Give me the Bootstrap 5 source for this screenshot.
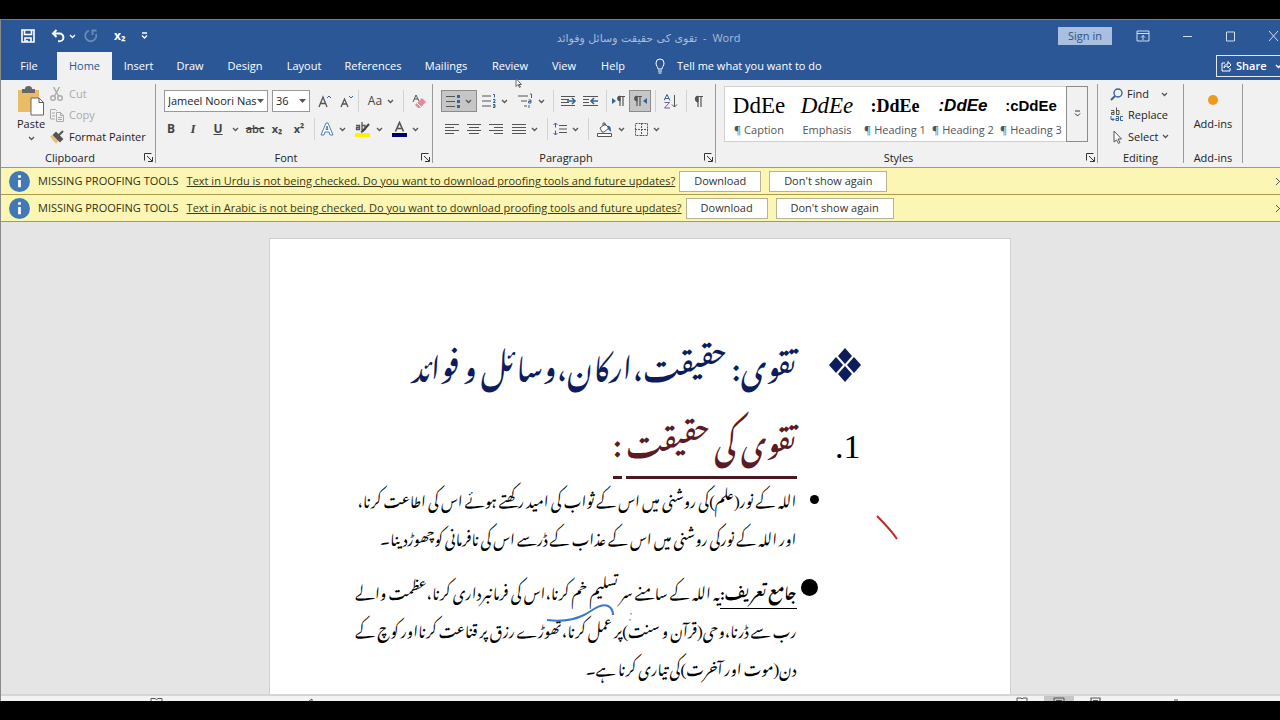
<!DOCTYPE html>
<html lang="en">
<head>
<meta charset="utf-8">
<meta name="viewport" content="width=device-width, initial-scale=1">
<title>Word</title>
<link href="https://cdn.jsdelivr.net/npm/bootstrap@5.3.0/dist/css/bootstrap.min.css" rel="stylesheet">
<script src="https://cdn.jsdelivr.net/npm/bootstrap@5.3.0/dist/js/bootstrap.bundle.min.js" defer></script>
<style>
:root{--blue:#2b5797}
body{background:#000;font:11px/16px "Open Sans","Noto Sans",sans-serif;color:#222;min-height:100vh;padding:19px 0;overflow:hidden}
button,select,input{font:inherit;color:inherit}
svg{display:block;fill:none;stroke:#555;flex:none}
.app-window{background:#e5e5e5;border-left:1px solid #8a8a8a;border-top:1px solid #6c7f9c}
.plain{background:none;border:0;padding:0;white-space:nowrap}
.plain:hover{background:#d5d5d5}
/* blue title area */
.titlebar{height:32px;background:var(--blue);color:#fff}
.titlebar svg,.tabs svg{stroke:#fff}
.quick{padding-left:20px}
.doc-name{color:#a9bcd8}
.doc-name bdi{font-family:"DejaVu Sans",sans-serif}
.sub-btn{font-size:12px;font-weight:700}
.signin{background:#a9bfdf;color:#31527f;width:54px;height:18px}
.win-controls{margin-right:-2px}
.win-controls svg{stroke:#d3deee}
.tabs{height:28px;background:var(--blue)}
.tabs .tab-link{color:#fff;text-decoration:none;height:28px;line-height:28px;text-align:center}
.tabs .active{background:#f1f1f1;color:#2b5797}
.share{border:1px solid #dfe8f5;color:#fff;height:22px;width:70px;margin-right:-6px}
/* ribbon */
.ribbon{background:#f1f1f1;height:88px;border-bottom:1px solid #a49c62}
.group{border-right:1px solid #9a9a9a;margin:4px 0;position:relative}
.group-label{height:16px;text-align:center}
.launch{position:absolute;right:2px;bottom:1px}
.group-body{height:66px}
.tool-row{height:30px}
.ib{width:22px;height:22px;display:flex;align-items:center;justify-content:center;color:#444}
.ib.split{width:36px;gap:5px}
.ib.on{background:#c6c6c6;border:1px solid #8c8c8c}
.vline{width:1px;height:22px;background:#d2d2d2}
.combo{border:1px solid #999;background:#fff;height:22px;padding:0 3px;white-space:nowrap}
.combo select{appearance:none;border:0;background:none;padding:0;width:100%;min-width:0;outline:0}
.gallery-wrap{padding-top:2px}
.gallery{background:#fff;border:1px solid #d0d0d0;height:56px}
.gallery .more{width:22px;border:1px solid #8c8c8c;background:#f1f1f1;height:56px;margin-top:-1px;margin-right:-1px}
.style-item{width:68px;text-align:center;color:#555}
.style-item .sample{display:block;height:32px;line-height:32px;color:#000;font-family:"Liberation Serif",serif;font-size:23px}
.style-item .sample.hd{font-size:18px;font-weight:700}
.style-item .sample.sans{font-family:"Liberation Sans",sans-serif}
.off{color:#aaa}
/* notices */
.notice{background:#fcf6b4;height:27px;border-bottom:1px solid #a89c4a;padding-left:8px;color:#332f10}
.notice a{color:#3c3810}
.notice .act{background:#fff;border:1px solid #b5b394;height:21px;color:#333}
.wide-82{width:82px}.wide-118{width:118px}
.notice .x{margin-right:-4px}
/* document */
.canvas-area{flex:1 1 0;min-height:0;overflow:hidden;padding:16px 2px 0 0;border-bottom:2px solid #d5d5d5}
.sheet{background:#fff;border:1px solid #cfcfcf;max-width:742px;width:100%;min-height:800px;padding:88px 149px 0 88px;font-family:"Noto Nastaliq Urdu",serif;color:#000;position:relative}
.sheet h1,.sheet h2{font-family:inherit;font-size:30px;font-weight:500;margin:0;height:76px;line-height:72px}
.sheet h1{color:#0c1c5c}
.sheet h2{color:#5b1a24}
.sheet h2 span{border-bottom:3px solid #4a1820;display:inline-block;height:76px}
.marker{width:64px;flex:none}
.num{font:34px/88px "Liberation Serif",serif;height:76px}
.sheet p{font-size:15px;line-height:38px;margin:0}
.sheet .full{display:block;text-align:justify;text-align-last:justify;white-space:nowrap}
.term{font-weight:700;border-bottom:1px solid #000;display:inline-block;height:38px}
.ink{position:absolute;overflow:visible}
.statusbar{height:5px;background:#f3f3f3;overflow:hidden}
.statusbar svg{height:5px}
.pointer{position:absolute;left:515px;top:78px;z-index:3}
</style>
</head>
<body class="d-flex flex-column">
<svg width="0" height="0" class="position-absolute" aria-hidden="true"><defs>
<symbol id="cv" viewBox="0 0 7 5"><path d="M1 1l2.500 2.500L6 1" stroke-width="1.300"/></symbol>
<symbol id="tri" viewBox="0 0 7 4"><path d="M0 0h7L3.500 4z" fill="#555" stroke="none"/></symbol>
<symbol id="launch" viewBox="0 0 9 9"><path d="M.5 7.500V.5h7M3 3l5 5M8.500 4v4.500H4" stroke="#333"/></symbol>
<symbol id="info" viewBox="0 0 20 20"><circle cx="10" cy="10" r="10" fill="#4279b5" stroke="none"/><path d="M10 4v2.500M10 8.500v7" stroke="#fff" stroke-width="2.600"/></symbol>
<symbol id="close" viewBox="0 0 9 9"><path d="M1 1l7 7M8 1L1 8"/></symbol>
</defs></svg>

<main class="app-window d-flex flex-column flex-grow-1 overflow-hidden">
<header>
<div class="titlebar d-flex align-items-center position-relative">
 <div class="quick d-flex align-items-center">
  <button class="plain" aria-label="Save"><svg width="14" height="14"><path d="M1 1h12v12H1zM3.500 1v4.500h7V1M4 13V9h6v4M6 11v2" stroke-width="1.600"/></svg></button>
  <button class="plain d-flex align-items-center gap-1 ms-3" aria-label="Undo"><svg width="14" height="14"><path d="M5.500 1L2 4.500 5.500 8M2 4.500h6.500a3.800 3.800 0 010 7.800H7" stroke-width="2"/></svg><svg width="7" height="5"><use href="#cv"/></svg></button>
  <button class="plain ms-2" aria-label="Repeat"><svg width="14" height="14" opacity=".3"><path d="M5 1.500a5.500 5.500 0 107 3.500M12.500 1.500H8.500V6" stroke-width="1.800"/></svg></button>
  <button class="plain text-white sub-btn ms-3" aria-label="Subscript">x₂</button>
  <button class="plain ms-3" aria-label="Customize"><svg width="7" height="8"><path d="M1 1h5M1 3.500L3.500 6 6 3.500" stroke-width="1.300"/></svg></button>
 </div>
 <div class="doc-name position-absolute start-50 translate-middle-x ps-3 pt-1"><bdi lang="ur">تقوی کی حقیقت وسائل وفوائد</bdi>&nbsp; - &nbsp;Word</div>
 <div class="win-controls d-flex align-items-center ms-auto">
  <button class="signin plain me-4">Sign in</button>
  <div class="d-flex align-items-center gap-4">
  <button class="plain" aria-label="Ribbon display options"><svg width="14" height="12"><path d="M1 1h12v10H1zM1 3.500h12M7 10V5.500M5 7.500l2-2 2 2"/></svg></button>
  <button class="plain ps-2" aria-label="Minimize"><svg width="11" height="11"><path d="M1 5.500h9"/></svg></button>
  <button class="plain ps-2" aria-label="Maximize"><svg width="11" height="11"><path d="M1.500 1h8v9h-8z"/></svg></button>
  <button class="plain ps-2" aria-label="Close"><svg width="14" height="12"><path d="M1 1l9 10M10 1L1 11"/></svg></button>
  </div>
 </div>
</div>
<nav class="tabs d-flex align-items-center">
 <a href="#" class="tab-link" style="width:56px">File</a>
 <a href="#" class="tab-link active" style="width:55px">Home</a>
 <a href="#" class="tab-link" style="width:53px">Insert</a>
 <a href="#" class="tab-link" style="width:50px">Draw</a>
 <a href="#" class="tab-link" style="width:60px">Design</a>
 <a href="#" class="tab-link" style="width:58px">Layout</a>
 <a href="#" class="tab-link" style="width:80px">References</a>
 <a href="#" class="tab-link" style="width:66px">Mailings</a>
 <a href="#" class="tab-link" style="width:62px">Review</a>
 <a href="#" class="tab-link" style="width:46px">View</a>
 <a href="#" class="tab-link" style="width:52px">Help</a>
 <button class="plain text-white d-flex align-items-center gap-2 ps-3"><svg width="14" height="16"><path d="M3 11c0-2-2-3-2-6a4 4 0 018 0c0 3-2 4-2 6zM3 13h4M3.500 15h3"/></svg>Tell me what you want to do</button>
 <button class="share plain ms-auto d-flex align-items-center gap-1 px-1 fw-semibold"><svg width="11" height="12"><path d="M4 3H1v8h8V8M3 8c0-3 2-4 4-4V1.500L10 5 7 8V6C5 6 4 6.500 3 8z"/></svg>Share<svg width="7" height="5" class="ms-1"><use href="#cv"/></svg></button>
</nav>
</header>

<section class="ribbon d-flex" aria-label="Home">
 <div class="group" style="width:155px">
  <div class="group-body d-flex">
   <button class="plain ps-3 d-flex flex-column align-items-center"><svg width="27" height="32"><path d="M0 6h21v22H0z" fill="#e9bd68" stroke="none"/><path d="M4 5h3a3.500 3 0 017 0h3v4H4z" fill="#666" stroke="none"/><path d="M13 14h8l4.500 4.500V31H13z" fill="#fff" stroke="#666"/><path d="M21 14v4.500h4.500"/></svg><span>Paste</span><svg width="7" height="5" class="mt-1"><use href="#cv"/></svg></button>
   <div class="d-flex flex-column ms-1">
    <button class="plain off d-flex align-items-center gap-1" style="height:20px"><svg width="16" height="14"><g stroke="#aaa" stroke-width="1.400"><path d="M4.500 0l5 9M10.500 0l-5 9"/><circle cx="4" cy="11" r="2.300"/><circle cx="11" cy="11" r="2.300"/></g></svg>Cut</button>
    <button class="plain off d-flex align-items-center gap-1" style="height:22px"><svg width="16" height="14"><g stroke="#aaa"><path d="M6 11H1.500V1.500h5L8 3M3 5h3M3 8h3M7.500 4.500h4l3 3v6h-7zM11.500 4.500v3h3M9 9.500h4M9 11.500h4"/></g></svg>Copy</button>
    <button class="plain d-flex align-items-center gap-1" style="height:21px"><svg width="16" height="14"><path d="M1 6l4-1 5 5-3 4c-1-2-3-3-6-8z" fill="#e9c07a" stroke="none"/><path d="M5 5l2-2 6 6-2 2zM9.500 5.500L14 1" fill="#555" stroke="#555" stroke-width="2"/></svg>Format Painter</button>
   </div>
  </div>
  <div class="group-label pe-3">Clipboard</div><button class="plain launch" aria-label="Clipboard settings"><svg width="9" height="9"><use href="#launch"/></svg></button>
 </div>

 <div class="group" style="width:277px">
  <div class="group-body">
   <div class="tool-row d-flex align-items-center pt-1 ps-1 ms-1">
    <div class="combo d-flex align-items-center" style="width:104px"><select aria-label="Font"><option>Jameel Noori Nas</option></select><svg width="7" height="4"><use href="#tri"/></svg></div>
    <div class="combo d-flex align-items-center ms-1" style="width:38px"><select aria-label="Font size"><option>36</option></select><svg width="7" height="4"><use href="#tri"/></svg></div>
    <button class="plain ib ms-1" aria-label="Grow font"><svg width="14" height="14"><path d="M1 13L5 3l4 10M2.500 9.500h5" stroke-width="1.300"/><path d="M9 4l2-2 2 2" stroke="#37639c"/></svg></button>
    <button class="plain ib" aria-label="Shrink font"><svg width="14" height="14"><path d="M1 13l3.500-8L8 13M2 10h5" stroke-width="1.300"/><path d="M9 2l2 2 2-2" stroke="#37639c"/></svg></button>
    <span class="vline"></span>
    <button class="plain ib split ms-1" aria-label="Change case"><span style="font-size:12px">Aa</span><svg width="7" height="5"><use href="#cv"/></svg></button>
    <span class="vline ms-1"></span>
    <button class="plain ib ms-1" aria-label="Clear formatting"><svg width="14" height="15"><path d="M1 8l3-7 3 6M2 5h4"/><path d="M4 10l6-6 4 4-6 6H6l-3-3z" fill="#e58a98" stroke="none"/><path d="M5 9l4 4" stroke="#fff"/></svg></button>
   </div>
   <div class="tool-row d-flex align-items-center ps-1">
    <button class="plain ib fw-bold" style="font-size:12px">B</button>
    <button class="plain ib fst-italic fw-bold" style="font-size:13px;font-family:'Liberation Serif',serif">I</button>
    <button class="plain ib split ms-1" aria-label="Underline"><span class="text-decoration-underline fw-bold" style="font-size:12px">U</span><svg width="7" height="5" class="ms-1"><use href="#cv"/></svg></button>
    <button class="plain ib text-decoration-line-through fw-semibold">abc</button>
    <button class="plain ib fw-bold" aria-label="Subscript">x₂</button>
    <button class="plain ib fw-bold" aria-label="Superscript">x²</button>
    <span class="vline ms-1"></span>
    <button class="plain ib split" aria-label="Text effects"><svg width="14" height="14"><path d="M1 13L6 1h2l5 12h-3l-1-3H5l-1 3zM6 7.500h2L7 4z" stroke="#4e7fb8" fill="#fff"/></svg><svg width="7" height="5"><use href="#cv"/></svg></button>
    <button class="plain ib split" aria-label="Highlight"><svg width="16" height="16"><path d="M0 12h15v4H0z" fill="#fff200" stroke="none"/><path d="M1 4.500h3.500v4h-3v-2h3M7 1v7.500h3v-4H7" stroke-width="1.300"/><path d="M14 3l-6 7-2 1" stroke="#444" stroke-width="2"/></svg><svg width="7" height="5"><use href="#cv"/></svg></button>
    <button class="plain ib split" aria-label="Font colour"><svg width="15" height="16"><path d="M0 12h15v4H0z" fill="#000060" stroke="none"/><path d="M3.500 10.500l4-9 4 9M5 7.500h5" stroke-width="1.600"/></svg><svg width="7" height="5"><use href="#cv"/></svg></button>
   </div>
  </div>
  <div class="group-label pe-3">Font</div><button class="plain launch" aria-label="Font settings"><svg width="9" height="9"><use href="#launch"/></svg></button>
 </div>

 <div class="group" style="width:283px">
  <div class="group-body">
   <div class="tool-row d-flex align-items-center pt-1 ps-1 ms-1">
    <button class="plain ib split on" aria-label="Bullets"><svg width="14" height="14"><path d="M0 2.500h9M0 7.500h9M0 12.500h9"/><path d="M11 2.500h3M11 7.500h3M11 12.500h3" stroke="#37639c" stroke-width="3"/></svg><svg width="7" height="5"><use href="#cv"/></svg></button>
    <button class="plain ib split" aria-label="Numbering"><svg width="14" height="16"><path d="M0 3h9M0 8h9M0 13h9"/><path d="M11 1.500h1.500v3M11 6.500h2v1.500l-2 1.500h2.500M11 11.500h2v3h-2M11 13h2" stroke="#37639c"/></svg><svg width="7" height="5"><use href="#cv"/></svg></button>
    <button class="plain ib split" aria-label="Multilevel list"><svg width="15" height="16"><path d="M0 3h10M3 8h6M6 13h3"/><path d="M12 1h1.500v4M10.500 7h2.500v3h-2.500V8.500H13M11 12v3" stroke="#37639c"/></svg><svg width="7" height="5"><use href="#cv"/></svg></button>
    <span class="vline ms-1"></span>
    <button class="plain ib ms-1" aria-label="Indent"><svg width="16" height="12"><path d="M0 1.500h14M0 4.500h8M0 7.500h8M0 10.500h14"/><path d="M6 6h8M11 3l3 3-3 3" stroke="#37639c" stroke-width="1.600"/></svg></button>
    <button class="plain ib" aria-label="Outdent"><svg width="16" height="12"><path d="M0 1.500h15M0 4.500h6M0 7.500h6M0 10.500h15"/><path d="M8 6h7M11 3L8 6l3 3" stroke="#37639c" stroke-width="1.600"/></svg></button>
    <span class="vline ms-1"></span>
    <button class="plain ib" aria-label="Left to right"><svg width="13" height="12"><path d="M0 3l4 3-4 3z" fill="#37639c" stroke="none"/><path d="M8 1v10M11 1v10M6 1.500h7" stroke-width="1.200"/><path d="M8 1a2.500 2.500 0 000 5z" fill="#555"/></svg></button>
    <button class="plain ib on" aria-label="Right to left"><svg width="13" height="12"><path d="M13 3L9 6l4 3z" fill="#37639c" stroke="none"/><path d="M3 1v10M6 1v10M2 1.500h6" stroke-width="1.200"/><path d="M3 1a2.500 2.500 0 000 5z" fill="#555"/></svg></button>
    <span class="vline ms-1"></span>
    <button class="plain ib ms-1" aria-label="Sort"><svg width="14" height="15"><path d="M0 6.500L3 .5l3 6M1 4.500h4" stroke="#37639c"/><path d="M.5 8.500h5l-5 5.500h5.500" stroke="#765a8c"/><path d="M10.500 1v12M8 10.500l2.500 2.500 2.500-2.500"/></svg></button>
    <span class="vline ms-1"></span>
    <button class="plain ib" aria-label="Show marks"><svg width="10" height="13"><path d="M5 1v11M8 1v11M4 1.500h6" stroke-width="1.200"/><path d="M5 1a2.500 2.800 0 000 6z" fill="#555"/></svg></button>
   </div>
   <div class="tool-row d-flex align-items-center ps-1 ms-1">
    <button class="plain ib" aria-label="Align left"><svg width="14" height="12"><path d="M0 1.500h14M0 4.500h9M0 7.500h14M0 10.500h9"/></svg></button>
    <button class="plain ib" aria-label="Center"><svg width="14" height="12"><path d="M0 1.500h14M2 4.500h10M0 7.500h14M2 10.500h10"/></svg></button>
    <button class="plain ib" aria-label="Align right"><svg width="14" height="12"><path d="M0 1.500h14M5 4.500h9M0 7.500h14M5 10.500h9"/></svg></button>
    <button class="plain ib split" aria-label="Justify"><svg width="14" height="12"><path d="M0 1.500h14M0 4.500h14M0 7.500h14M0 10.500h14"/></svg><svg width="7" height="5"><use href="#cv"/></svg></button>
    <span class="vline ms-1"></span>
    <button class="plain ib split" aria-label="Line spacing"><svg width="14" height="14"><path d="M6 3.500h8M6 7h8M6 10.500h8"/><path d="M2.500 1v4.500M.5 3l2-2 2 2M2.500 8.500V13M.5 11l2 2 2-2" stroke="#37639c"/></svg><svg width="7" height="5"><use href="#cv"/></svg></button>
    <span class="vline ms-1"></span>
    <button class="plain ib split ms-1" aria-label="Shading"><svg width="16" height="15"><path d="M.5 11.500h14v3H.5zM3 6l5-4 4 4-5 4H5zM6 4V1h2v3" fill="#fff"/><path d="M10 4c3-1 4 1 4 6l-3-3" fill="#37639c" stroke="none"/></svg><svg width="7" height="5"><use href="#cv"/></svg></button>
    <button class="plain ib split" aria-label="Borders"><svg width="13" height="13"><path d="M.5.5h12v12H.5zM6.500 0v13M0 6.500h13" stroke-dasharray="2 1"/></svg><svg width="7" height="5"><use href="#cv"/></svg></button>
   </div>
  </div>
  <div class="group-label pe-3">Paragraph</div><button class="plain launch" aria-label="Paragraph settings"><svg width="9" height="9"><use href="#launch"/></svg></button>
 </div>

 <div class="group px-2" style="width:382px">
  <div class="group-body gallery-wrap"><div class="gallery d-flex" style="width:364px">
   <button class="plain style-item"><span class="sample">DdEe</span>¶ Caption</button>
   <button class="plain style-item"><span class="sample fst-italic">DdEe</span>Emphasis</button>
   <button class="plain style-item"><span class="sample hd">:DdEe</span>¶ Heading 1</button>
   <button class="plain style-item"><span class="sample hd sans fst-italic" style="font-size:17px">:DdEe</span>¶ Heading 2</button>
   <button class="plain style-item"><span class="sample hd sans" style="font-size:15px">:cDdEe</span>¶ Heading 3</button>
   <button class="more plain ms-auto d-flex align-items-center justify-content-center" aria-label="More styles"><svg width="7" height="8"><path d="M1 1h5M1 3.500L3.500 6 6 3.500" stroke="#333"/></svg></button>
  </div></div>
  <div class="group-label pe-3">Styles</div><button class="plain launch" aria-label="Styles settings"><svg width="9" height="9"><use href="#launch"/></svg></button>
 </div>

 <div class="group ps-2" style="width:86px">
  <div class="group-body ps-1">
   <button class="plain d-flex align-items-center gap-1" style="height:20px"><svg width="13" height="13"><circle cx="8" cy="5" r="4" stroke="#37639c" stroke-width="1.400"/><path d="M5 8l-4 4" stroke="#37639c" stroke-width="2"/></svg>Find<svg width="7" height="5" class="ms-2"><use href="#cv"/></svg></button>
   <button class="plain d-flex align-items-center gap-1" style="height:22px"><svg width="14" height="16"><path d="M1 3.500h3v4H1.500v-2H4M6.500.5v7H9v-4H6.500"/><path d="M1 9v3.500h3M2.500 11L4 12.500 2.500 14M6 9.500h2.500v4H6v-2h2.500M13 9.500h-2.500v4H13" stroke="#37639c"/></svg>Replace</button>
   <button class="plain d-flex align-items-center gap-1" style="height:21px"><svg width="14" height="14"><path d="M4 1v11l2.500-2 2 3.500 1.500-1-2-3.500h3.500z" fill="#fff"/></svg>Select<svg width="7" height="5"><use href="#cv"/></svg></button>
  </div>
  <div class="group-label pe-2">Editing</div>
 </div>
 <div class="group" style="width:59px">
  <button class="plain group-body w-100 d-flex flex-column align-items-center pt-2"><svg width="12" height="16"><circle cx="6" cy="8" r="5" fill="#f09a1c" stroke="none"/></svg><span class="pt-2">Add-ins</span></button>
  <div class="group-label">Add-ins</div>
 </div>
</section>

<div class="notice d-flex align-items-center" role="status"><svg width="21" height="21"><use href="#info"/></svg><span class="ms-2">MISSING PROOFING TOOLS</span><a href="#" class="ms-2 me-1">Text in Urdu is not being checked. Do you want to download proofing tools and future updates?</a><button class="act plain wide-82">Download</button><button class="act plain wide-118 ms-2">Don't show again</button><button class="plain x ms-auto" aria-label="Close"><svg width="9" height="9"><use href="#close"/></svg></button></div>
<div class="notice d-flex align-items-center" role="status"><svg width="21" height="21"><use href="#info"/></svg><span class="ms-2">MISSING PROOFING TOOLS</span><a href="#" class="ms-2 me-1">Text in Arabic is not being checked. Do you want to download proofing tools and future updates?</a><button class="act plain wide-82">Download</button><button class="act plain wide-118 ms-2">Don't show again</button><button class="plain x ms-auto" aria-label="Close"><svg width="9" height="9"><use href="#close"/></svg></button></div>

<div class="canvas-area">
 <article class="sheet mx-auto" dir="rtl" lang="ur">
  <div class="d-flex"><div class="marker d-flex align-items-center"><svg width="32" height="34" viewBox="0 0 32 34"><path d="M16 0l7 8-7 8-7-8zM16 18l7 8-7 8-7-8zM7 9l7 8-7 8-7-8zM25 9l7 8-7 8-7-8z" fill="#0c1c5c" stroke="none"/></svg></div><h1>تقوی: حقیقت،ارکان،وسائل و فوائد</h1></div>
  <div class="d-flex"><div class="marker num">1.</div><h2><span>تقوی کی حقیقت</span> <span>:</span></h2></div>
  <div class="d-flex"><div class="marker d-flex justify-content-end pt-3" style="padding-left:13px"><svg width="9" height="9"><circle cx="4.500" cy="4.500" r="4.500" fill="#000" stroke="none"/></svg></div>
   <p class="flex-grow-1"><span class="full">اللہ کے نور(علم)کی روشنی میں اس کے ثواب کی امید رکھتے ہوئے اس کی اطاعت کرنا،</span>اور اللہ کے نورکی روشنی میں اس کے عذاب کے ڈرسے اس کی نافرمانی کوچھوڑدینا۔</p></div>
  <div class="d-flex mt-3"><div class="marker d-flex justify-content-end pt-2 ps-1"><svg width="17" height="17"><circle cx="8.500" cy="8.500" r="8.500" fill="#000" stroke="none"/></svg></div>
   <p class="flex-grow-1"><span class="full"><span class="term">جامع تعریف:</span>یہ اللہ کے سامنے سر تسلیم خم کرنا،اس کی فرمانبرداری کرنا،عظمت والے</span><span class="full">رب سے ڈرنا،وحی(قرآن و سنت)پر عمل کرنا،تھوڑے رزق پر قناعت کرنااور کوچ کے</span>دن(موت اور آخرت)کی تیاری کرنا ہے۔</p></div>
  <svg class="ink" style="left:276px;top:364px" width="90" height="24"><path d="M1 17C18 19 30 16 38 12S54 0 62 3c4 2 5 5 5 9" stroke="#3a78c8" stroke-width="2"/><path d="M85 10v1.500M84 16v1.500" stroke="#6a9ad8" stroke-width="1.500"/></svg>
  <svg class="ink" style="left:606px;top:276px" width="26" height="26"><path d="M1 1c8 8 14 14 20 23" stroke="#c0282c" stroke-width="2"/></svg>
 </article>
</div>
<footer class="statusbar d-flex"><svg width="320" height="5"><path d="M150 5V2.500h4l1.500 1 1.500-1h4V5M308 5l3-2v2"/></svg><svg width="12" height="5" class="ms-auto me-3"><path d="M1 5V2h4l1 1 1-1h4v3"/></svg><svg width="30" height="5" class="me-3"><path d="M0 0h30v5H0z" fill="#c6c6c6" stroke="none"/><path d="M10 5V2h10v3M12 4.500h6"/></svg><svg width="100" height="5"><path d="M1 5V2h9v3M3 4.500h5M84 4h4" stroke-width="1.200"/></svg><span style="width:90px"></span></footer>
</main>
<svg class="pointer" width="8" height="11"><path d="M1 .5v8l2-2 1.500 3 1-.5L4 6.500h2.500z" fill="#fff" stroke="#444" stroke-width=".8"/></svg>
</body>
</html>
